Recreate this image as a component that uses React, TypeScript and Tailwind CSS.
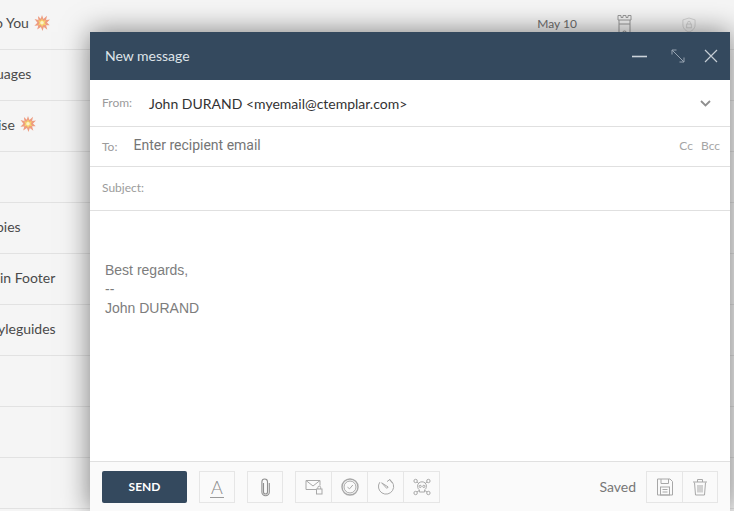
const Burst = ({ size = 16 }: { size?: number }) => (
  <svg width={size} height={size} viewBox="0 0 18 18" className="inline-block">
    <polygon
      points="9,0 10.6,4.4 14.6,0.8 13.6,5.6 18,5 14.6,8.4 17.6,11.6 13.6,11.4 15,16.6 11,13.4 9.6,18 7.8,13.6 3.6,16.4 4.8,11.8 0.4,12 3.8,8.8 0.6,4.6 5,5.6 4.4,1.2 7.6,4.2"
      fill="#ee9c80"
    />
    <polygon points="9,4 10.4,6.6 13.4,6 12,8.8 13.8,11.4 10.8,11 9,13.6 7.8,11 4.8,11.4 6.2,8.8 4.6,6 7.6,6.6" fill="#f6d26b" />
    <circle cx="9" cy="8.8" r="2" fill="#fbf3c8" />
  </svg>
)

const rows = [
  { text: "o You", burst: true, date: true, shift: "-ml-[5px]" },
  { text: "uages", shift: "-ml-[4px]" },
  { text: "ise", burst: true, shift: "-ml-[2px]" },
  { text: "", shift: "" },
  { text: "pies", shift: "-ml-[4px]" },
  { text: "in Footer", shift: "" },
  { text: "yleguides", shift: "-ml-[2px]" },
  { text: "", shift: "" },
  { text: "", shift: "" },
  { text: "", shift: "" },
]

const stroke = { fill: "none", stroke: "#a8a8a8", strokeWidth: 1 }

const MailLock = () => (
  <svg width="18" height="16" viewBox="0 0 18 16" {...stroke}>
    <path d="M11 10.5H1V1.5H15V6.5" />
    <path d="M1 1.5L8 7L15 1.5" />
    <rect x="11.5" y="10" width="5.5" height="5" />
    <path d="M12.8 10V8.6a1.4 1.4 0 0 1 2.9 0V10" />
  </svg>
)

const Clock = () => (
  <svg width="18" height="18" viewBox="0 0 18 18" {...stroke}>
    <circle cx="9" cy="9" r="8" strokeWidth="1.4" />
    <circle cx="9" cy="9" r="6" />
    <path d="M6.5 9.2L8.6 10.8L11.8 7" />
  </svg>
)

const Timer = () => (
  <svg width="18" height="18" viewBox="0 0 18 18" {...stroke}>
    <path d="M12.6 1.8A7.6 7.6 0 1 1 2.8 4.2" />
    <path d="M10 3.6L13 1.4L14.6 4.6" />
    <path d="M4.6 4.8L9.8 10.4L11.2 9Z" />
  </svg>
)

const Skull = () => (
  <svg width="18" height="18" viewBox="0 0 18 18" {...stroke}>
    <circle cx="2.6" cy="3" r="1.7" />
    <circle cx="15.4" cy="3" r="1.7" />
    <circle cx="2.6" cy="15" r="1.7" />
    <circle cx="15.4" cy="15" r="1.7" />
    <path d="M4 4L5.6 5.2M14 4L12.4 5.2M4 14L6 12.6M14 14L12 12.6" />
    <path d="M4.6 8.2C4.6 5.4 6.6 3.8 9 3.8S13.4 5.4 13.4 8.2C13.4 10 12.6 11.2 11.6 11.8V14H6.4V11.8C5.4 11.2 4.6 10 4.6 8.2Z" />
    <circle cx="7.2" cy="8.4" r="1.1" />
    <circle cx="10.8" cy="8.4" r="1.1" />
  </svg>
)

const Floppy = () => (
  <svg width="18" height="18" viewBox="0 0 18 18" {...stroke}>
    <path d="M1.5 1H14L16.5 3.5V17H1.5Z" />
    <path d="M5 1V5.5H12.5V1" />
    <rect x="4.5" y="9" width="9" height="8" />
    <path d="M6.5 11.5H11.5M6.5 14H11.5" />
  </svg>
)

const Bin = () => (
  <svg width="16" height="18" viewBox="0 0 16 18" {...stroke}>
    <path d="M1 4H15M5.5 4V1.5H10.5V4" />
    <path d="M2.5 4.5L3.5 17H12.5L13.5 4.5" />
    <path d="M6 7V14.5M8 7V14.5M10 7V14.5" />
  </svg>
)

const Clip = () => (
  <svg width="11" height="19" viewBox="0 0 11 19" fill="none" stroke="#8f8f8f" strokeWidth="1.1">
    <path d="M3.5 5V14a2 2 0 0 0 4 0V3.8a2.8 2.8 0 0 0 -5.6 0V14a3.6 3.6 0 0 0 7.4 0V5" />
  </svg>
)

export default function App() {
  return (
    <div className="relative h-[511px] w-[734px] overflow-hidden bg-[#f5f5f5] font-['Lato',sans-serif]">
      <div className="flex flex-col">
        {rows.map((row, i) => (
          <div
            key={i}
            className={`flex items-center border-b border-[#e2e2e2] pb-[4px] text-[14px] text-[#4a4a4a] ${i === 0 ? "h-[50px]" : "h-[51px]"}`}
          >
            <span className={`flex items-center gap-[5px] ${row.shift}`}>
              {row.text}
              {row.burst && <Burst />}
            </span>
            {row.date && (
              <div className="ml-auto flex items-center pr-[38px]">
                <span className="mt-[3px] text-[12px] text-[#6f6f6f]">May 10</span>
                <svg width="15" height="26" viewBox="0 0 15 26" className="ml-[40px] mt-[9px]" fill="none" stroke="#9a9a9a">
                  <path d="M1 1.5V6H14V1.5H11V3.5H9V1.5H6V3.5H4V1.5Z" />
                  <path d="M2 6V25M13 6V25M2 10H13" />
                  <path d="M5.5 25V19a2 2 0 0 1 4 0V25" />
                </svg>
                <svg width="14" height="16" viewBox="0 0 15 17" className="ml-[50px] mt-[5px]" fill="none" stroke="#d2d2d2">
                  <path d="M7.5 1L14 3V8.5C14 12 11 15 7.5 16C4 15 1 12 1 8.5V3Z" />
                  <rect x="5" y="7.5" width="5" height="4" />
                  <path d="M6 7.5V6a1.5 1.5 0 0 1 3 0V7.5" />
                </svg>
              </div>
            )}
          </div>
        ))}
      </div>

      <div className="absolute left-[90px] top-[32px] flex h-[479px] w-[640px] flex-col bg-white shadow-[0_0_26px_rgba(0,0,0,0.5)]">
        <div className="flex h-[48px] shrink-0 items-center bg-[#34495e] pb-[1px] pl-[15px] pr-[12px] text-[#dfe4e9]">
          <span className="text-[14px]">New message</span>
          <div className="ml-auto flex items-center">
            <svg width="15" height="14" viewBox="0 0 15 14" fill="none" stroke="#ccd3da" strokeWidth="1.6">
              <path d="M0 7.5H15" />
            </svg>
            <svg width="14" height="14" viewBox="0 0 14 14" className="ml-[24px]" fill="none" stroke="#96a3b0">
              <path d="M1 1L13 13M1 5.5V1H5.5M13 8.5V13H8.5" />
            </svg>
            <svg width="14" height="14" viewBox="0 0 14 14" className="ml-[19px]" fill="none" stroke="#c4ccd4" strokeWidth="1.2">
              <path d="M1 1L13 13M13 1L1 13" />
            </svg>
          </div>
        </div>

        <div className="flex h-[47px] shrink-0 items-center border-b border-[#e0e0e0] pl-[12px] pr-[19px]">
          <span className="w-[47px] text-[12px] text-[#9b9b9b]">From:</span>
          <span className="pt-[1px] text-[14px] text-[#333]">John DURAND &lt;myemail@ctemplar.com&gt;</span>
          <svg width="11" height="7" viewBox="0 0 11 7" className="ml-auto" fill="none" stroke="#8f8f8f" strokeWidth="1.8">
            <path d="M1 1L5.5 5.5L10 1" />
          </svg>
        </div>

        <div className="flex h-[40px] shrink-0 items-center border-b border-[#e0e0e0] pl-[12px] pr-[10px]">
          <span className="w-[31.5px] text-[12px] text-[#9b9b9b]">To:</span>
          <span className="pb-[2px] font-['Roboto',sans-serif] text-[14px] text-[#757575]">Enter recipient email</span>
          <span className="ml-auto pb-[1px] text-[12px] text-[#a5a5a5]">Cc</span>
          <span className="ml-[8px] pb-[1px] text-[12px] text-[#a5a5a5]">Bcc</span>
        </div>

        <div className="flex h-[44px] shrink-0 items-center border-b border-[#e0e0e0] pb-[1px] pl-[12px]">
          <span className="text-[12px] text-[#9b9b9b]">Subject:</span>
        </div>

        <div className="flex-1 pl-[15px] pt-[50px] font-['Liberation_Sans',sans-serif] text-[14px] leading-[19px] text-[#7d7d7d]">
          <div>Best regards,</div>
          <div>--</div>
          <div>John DURAND</div>
        </div>

        <div className="flex h-[50px] shrink-0 items-start border-t border-[#e0e0e0] bg-[#fafafa] pl-[12px] pt-[9px]">
          <button className="h-[32px] w-[85px] rounded-[2px] bg-[#34495e] text-[12px] font-bold text-white">SEND</button>
          <div className="ml-[12px] flex h-[32px] w-[36px] items-center justify-center border border-[#e6e6e6]">
            <span className="border-b border-[#9a9a9a] px-[1px] text-[18px] font-light leading-[20px] text-[#8a8a8a]">A</span>
          </div>
          <div className="ml-[12px] flex h-[32px] w-[36px] items-center justify-center border border-[#e6e6e6]">
            <Clip />
          </div>
          <div className="ml-[12px] flex h-[32px] divide-x divide-[#e6e6e6] border border-[#e6e6e6]">
            <div className="flex w-[36px] items-center justify-center"><MailLock /></div>
            <div className="flex w-[36px] items-center justify-center"><Clock /></div>
            <div className="flex w-[36px] items-center justify-center"><Timer /></div>
            <div className="flex w-[35px] items-center justify-center"><Skull /></div>
          </div>
          <span className="ml-auto self-center pb-[9px] text-[14px] text-[#777]">Saved</span>
          <div className="ml-[10px] mr-[12px] flex h-[32px] divide-x divide-[#e6e6e6] border border-[#e6e6e6]">
            <div className="flex w-[36px] items-center justify-center"><Floppy /></div>
            <div className="flex w-[34px] items-center justify-center"><Bin /></div>
          </div>
        </div>
      </div>
    </div>
  )
}
